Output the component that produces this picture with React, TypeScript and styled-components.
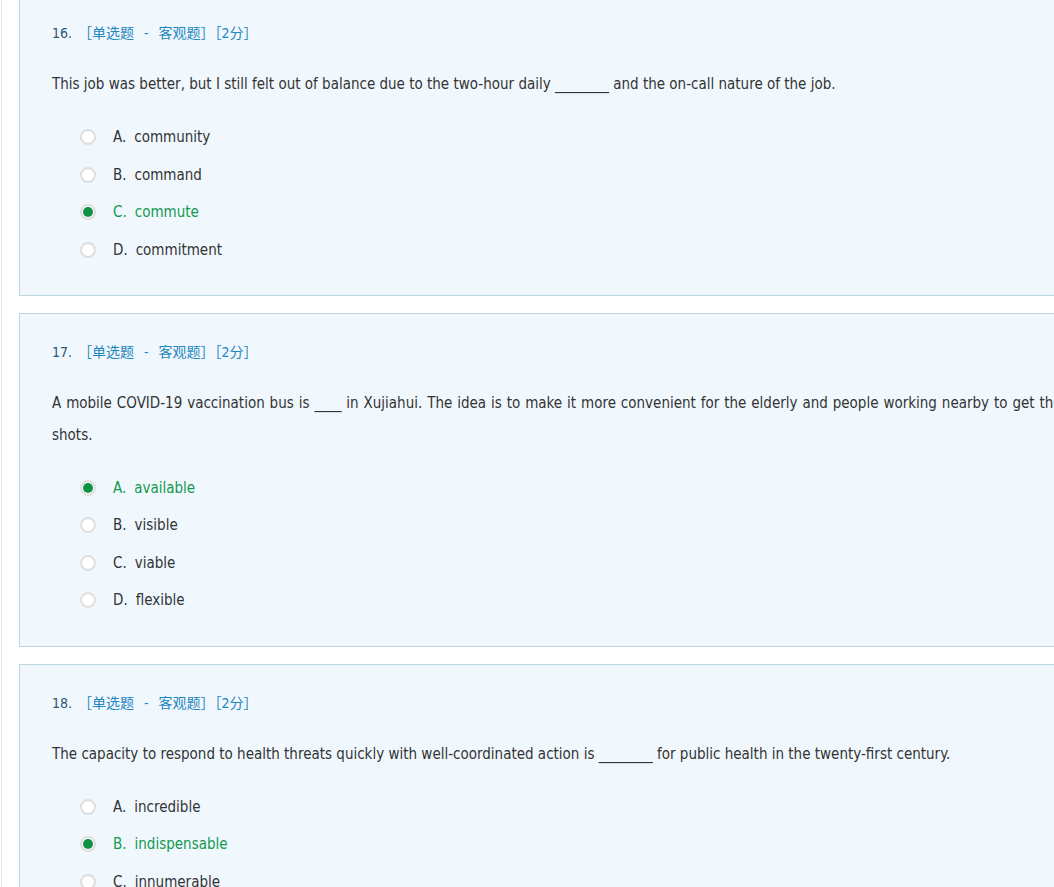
import React from "react";
import styled, { createGlobalStyle } from "styled-components";

const Global = createGlobalStyle`
  html, body { margin: 0; padding: 0; background: #fff; overflow: hidden; }
  body { font-family: "DejaVu Sans Condensed", "DejaVu Sans", "Noto Sans CJK SC", sans-serif; font-stretch: condensed; }
`;

const Page = styled.div`
  margin-left: 1px;
  border-left: 1px solid #e3e3e3;
  padding-left: 17px;
  min-height: 900px;
`;

const List = styled.div`
  margin-top: -6px;
  display: flex;
  flex-direction: column;
  gap: 17px;
  width: 1085px;
`;

const Card = styled.section`
  background: #f0f8fe;
  border: 1px solid #bcd7e3;
  padding: 27px 32px 26.5px 32px;
`;

const Header = styled.div`
  font-size: 14px;
  line-height: 22px;
  color: #1f86be;
  font-family: "DejaVu Sans Condensed", "DejaVu Sans", "Noto Sans CJK SC", sans-serif;
`;

const Num = styled.span`
  color: #2d5574;
  margin-right: 6px;
`;

const Dash = styled.span`
  margin: 0 10px;
`;

const Question = styled.p`
  margin: 24px 0 18.25px 0;
  font-size: 15px;
  line-height: 32px;
  color: #333;
  text-align: justify;
`;

const Options = styled.ul`
  list-style: none;
  margin: 0;
  padding: 0 0 0 28px;
`;

const Option = styled.li<{ $selected?: boolean }>`
  display: flex;
  align-items: center;
  height: 37.5px;
  font-size: 15px;
  color: ${(p) => (p.$selected ? "#13994f" : "#333")};
`;

const Radio = styled.span<{ $selected?: boolean }>`
  box-sizing: border-box;
  width: 16px;
  height: 16px;
  border-radius: 50%;
  border: 2px solid #dedede;
  background: #fff;
  margin-right: 17px;
  display: flex;
  align-items: center;
  justify-content: center;
  &::after {
    content: "";
    display: ${(p) => (p.$selected ? "block" : "none")};
    width: 10px;
    height: 10px;
    border-radius: 50%;
    background: #0e9246;
  }
`;

const Letter = styled.span`
  margin-right: 8px;
`;

type Q = {
  num: number;
  text: string;
  options: string[];
  selected: number;
};

const questions: Q[] = [
  {
    num: 16,
    text: "This job was better, but I still felt out of balance due to the two-hour daily ________ and the on-call nature of the job.",
    options: ["community", "command", "commute", "commitment"],
    selected: 2,
  },
  {
    num: 17,
    text: "A mobile COVID-19 vaccination bus is ____ in Xujiahui. The idea is to make it more convenient for the elderly and people working nearby to get their shots.",
    options: ["available", "visible", "viable", "flexible"],
    selected: 0,
  },
  {
    num: 18,
    text: "The capacity to respond to health threats quickly with well-coordinated action is ________ for public health in the twenty-first century.",
    options: ["incredible", "indispensable", "innumerable", "invaluable"],
    selected: 1,
  },
];

const letters = ["A.", "B.", "C.", "D."];

export default function App() {
  return (
    <>
      <Global />
      <Page>
        <List>
          {questions.map((q) => (
            <Card key={q.num}>
              <Header>
                <Num>{q.num}.</Num>［单选题<Dash>-</Dash>客观题］［2分］
              </Header>
              <Question>{q.text}</Question>
              <Options>
                {q.options.map((o, i) => (
                  <Option key={o} $selected={i === q.selected}>
                    <Radio $selected={i === q.selected} />
                    <Letter>{letters[i]}</Letter>
                    {o}
                  </Option>
                ))}
              </Options>
            </Card>
          ))}
        </List>
      </Page>
    </>
  );
}
